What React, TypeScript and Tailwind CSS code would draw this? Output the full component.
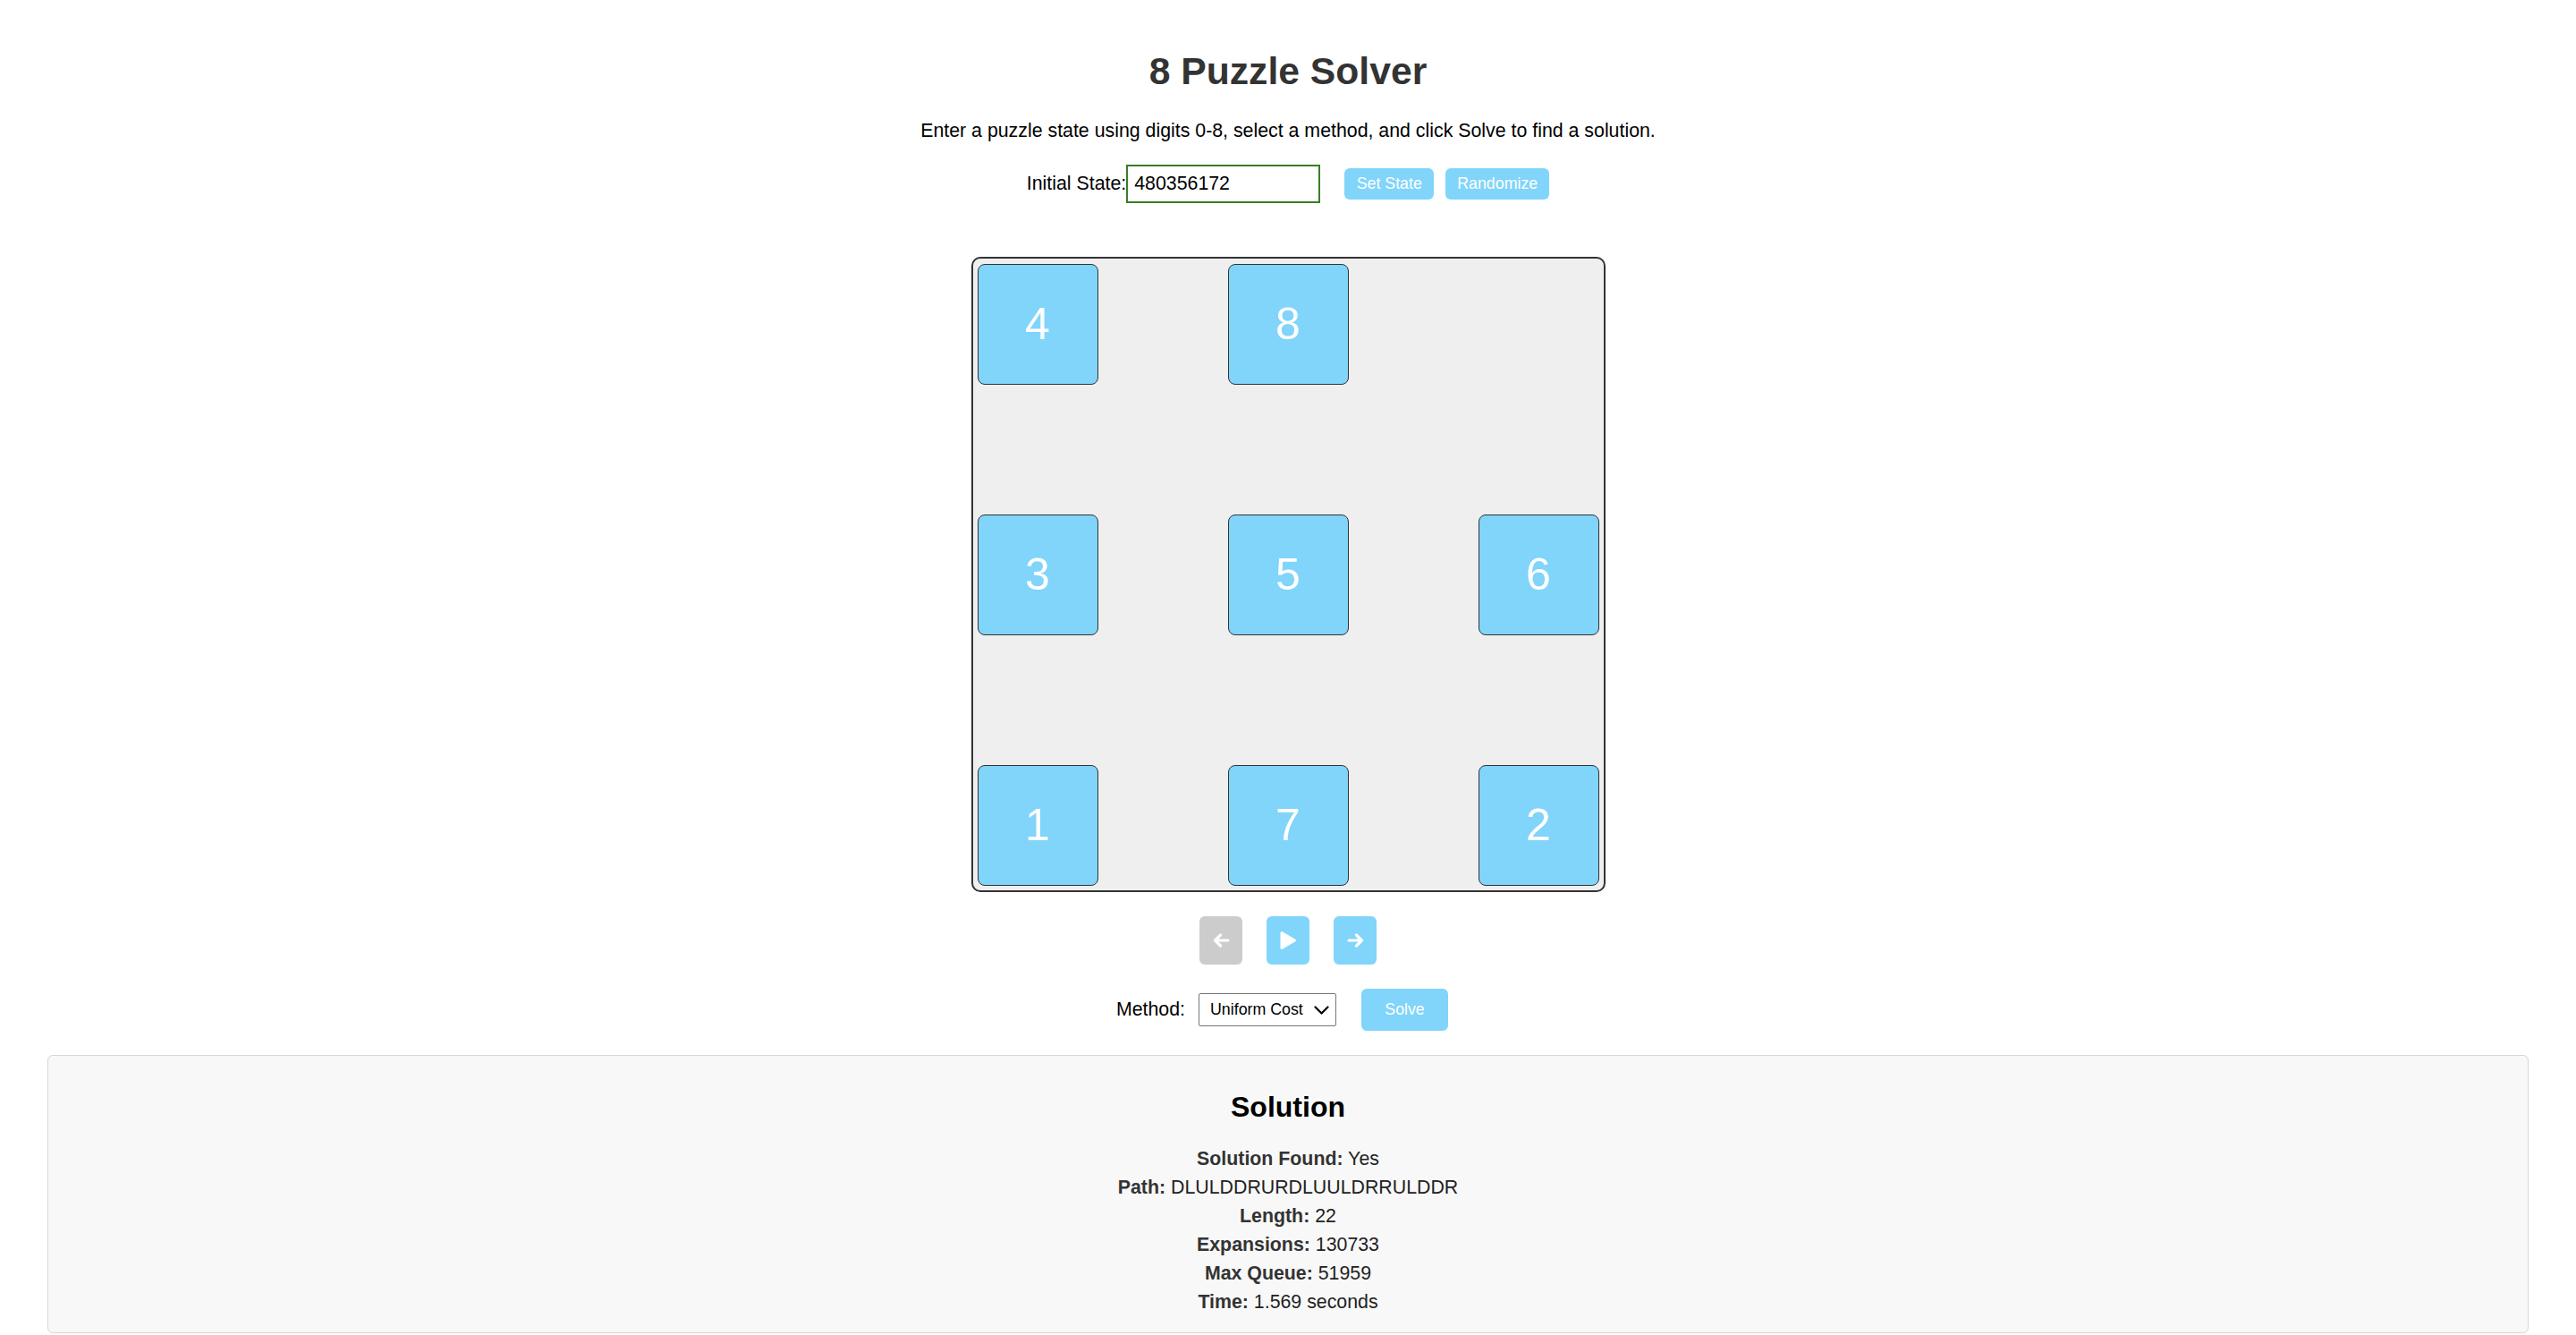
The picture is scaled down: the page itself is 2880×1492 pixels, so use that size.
import { useState } from 'react';

const tiles = [4, 8, 0, 3, 5, 6, 1, 7, 2];

const stats = [
  { label: 'Solution Found:', value: 'Yes' },
  { label: 'Path:', value: 'DLULDDRURDLUULDRRULDDR' },
  { label: 'Length:', value: '22' },
  { label: 'Expansions:', value: '130733' },
  { label: 'Max Queue:', value: '51959' },
  { label: 'Time:', value: '1.569 seconds' },
];

function ArrowIcon({ dir }: { dir: 'left' | 'right' }) {
  return (
    <svg width="19" height="16" viewBox="0 0 19 16" fill="none" stroke="white" strokeWidth="3.2" strokeLinecap="round" strokeLinejoin="round">
      {dir === 'left' ? (
        <path d="M17 8H2.5M8.5 2 2.5 8l6 6" />
      ) : (
        <path d="M2 8h14.5M10.5 2l6 6-6 6" />
      )}
    </svg>
  );
}

export default function App() {
  const [state, setState] = useState('480356172');

  return (
    <div className="min-h-screen bg-white px-[53px] font-['Liberation_Sans',Arial,sans-serif] text-black">
      <h1 className="pt-[55px] text-center text-[42.67px] font-bold leading-[49px] text-[#333]">8 Puzzle Solver</h1>
      <p className="mt-[30px] text-center text-[21.33px] leading-[25px]">
        Enter a puzzle state using digits 0-8, select a method, and click Solve to find a solution.
      </p>

      {/* Eingabe */}
      <div className="mt-[25px] flex h-[43px] items-center justify-center">
        <label className="text-[21.33px] leading-[25px]">Initial State:</label>
        <input
          value={state}
          onChange={(e) => setState(e.target.value)}
          className="h-[43px] w-[217px] border-2 border-[#3b7d23] bg-white pl-[7px] text-[21.33px] text-black outline-none"
        />
        <button className="ml-[27px] h-[35px] w-[100px] rounded-[6px] bg-[#81d4fa] text-[17.8px] text-white">Set State</button>
        <button className="ml-[13px] h-[35px] w-[116px] rounded-[6px] bg-[#81d4fa] text-[17.8px] text-white">Randomize</button>
      </div>

      {/* Brett */}
      <div className="mx-auto mt-[60px] grid w-[709px] grid-cols-[135px_135px_135px] grid-rows-[135px_135px_135px] gap-[145px] rounded-[10px] border-2 border-[#333] bg-[#efefef] px-[5px] pb-[5px] pt-[6px]">
        {tiles.map((t, i) =>
          t === 0 ? (
            <div key={i} />
          ) : (
            <div
              key={i}
              className="flex items-center justify-center rounded-[8px] border border-[#333] bg-[#81d4fa] text-[50px] text-white"
            >
              {t}
            </div>
          )
        )}
      </div>

      {/* Steuerung */}
      <div className="mt-[27px] flex justify-center gap-[27px]">
        <button className="flex h-[54px] w-[48px] items-center justify-center rounded-[6px] bg-[#cccccc]">
          <ArrowIcon dir="left" />
        </button>
        <button className="flex h-[54px] w-[48px] items-center justify-center rounded-[6px] bg-[#81d4fa]">
          <svg width="20" height="22" viewBox="0 0 20 22" fill="white" stroke="white" strokeWidth="3" strokeLinejoin="round">
            <path d="M3 2.5 17.5 11 3 19.5z" />
          </svg>
        </button>
        <button className="flex h-[54px] w-[48px] items-center justify-center rounded-[6px] bg-[#81d4fa]">
          <ArrowIcon dir="right" />
        </button>
      </div>

      {/* Methode */}
      <div className="mt-[27px] flex h-[47px] items-center justify-center pr-[13px]">
        <span className="text-[21.33px] leading-[25px]">Method:</span>
        <div className="relative ml-[15px]">
          <select className="h-[37px] w-[154px] appearance-none rounded-[2px] border border-[#767676] bg-white pl-[12px] text-[17.8px] text-black">
            <option>Uniform Cost</option>
            <option>A* Misplaced Tile</option>
            <option>A* Manhattan</option>
          </select>
          <svg className="pointer-events-none absolute right-[8px] top-[14px]" width="17" height="10" viewBox="0 0 17 10" fill="none" stroke="black" strokeWidth="2.2" strokeLinecap="round" strokeLinejoin="round">
            <path d="M1.5 1.5 8.5 8.5 15.5 1.5" />
          </svg>
        </div>
        <button className="ml-[28px] h-[47px] w-[97px] rounded-[6px] bg-[#81d4fa] text-[17.8px] text-white">Solve</button>
      </div>

      {/* Lösung */}
      <div className="mt-[27px] rounded-[6px] border border-[#d6d6d6] bg-[#f8f8f8] pb-[18px] pt-[39px] text-center">
        <h2 className="text-[32px] font-bold leading-[37px] text-black">Solution</h2>
        <div className="mt-[23px]">
          {stats.map((s) => (
            <div key={s.label} className="text-[21.33px] leading-[32px] text-[#222]">
              <span className="font-bold text-[#333]">{s.label}</span> {s.value}
            </div>
          ))}
        </div>
      </div>
    </div>
  );
}
